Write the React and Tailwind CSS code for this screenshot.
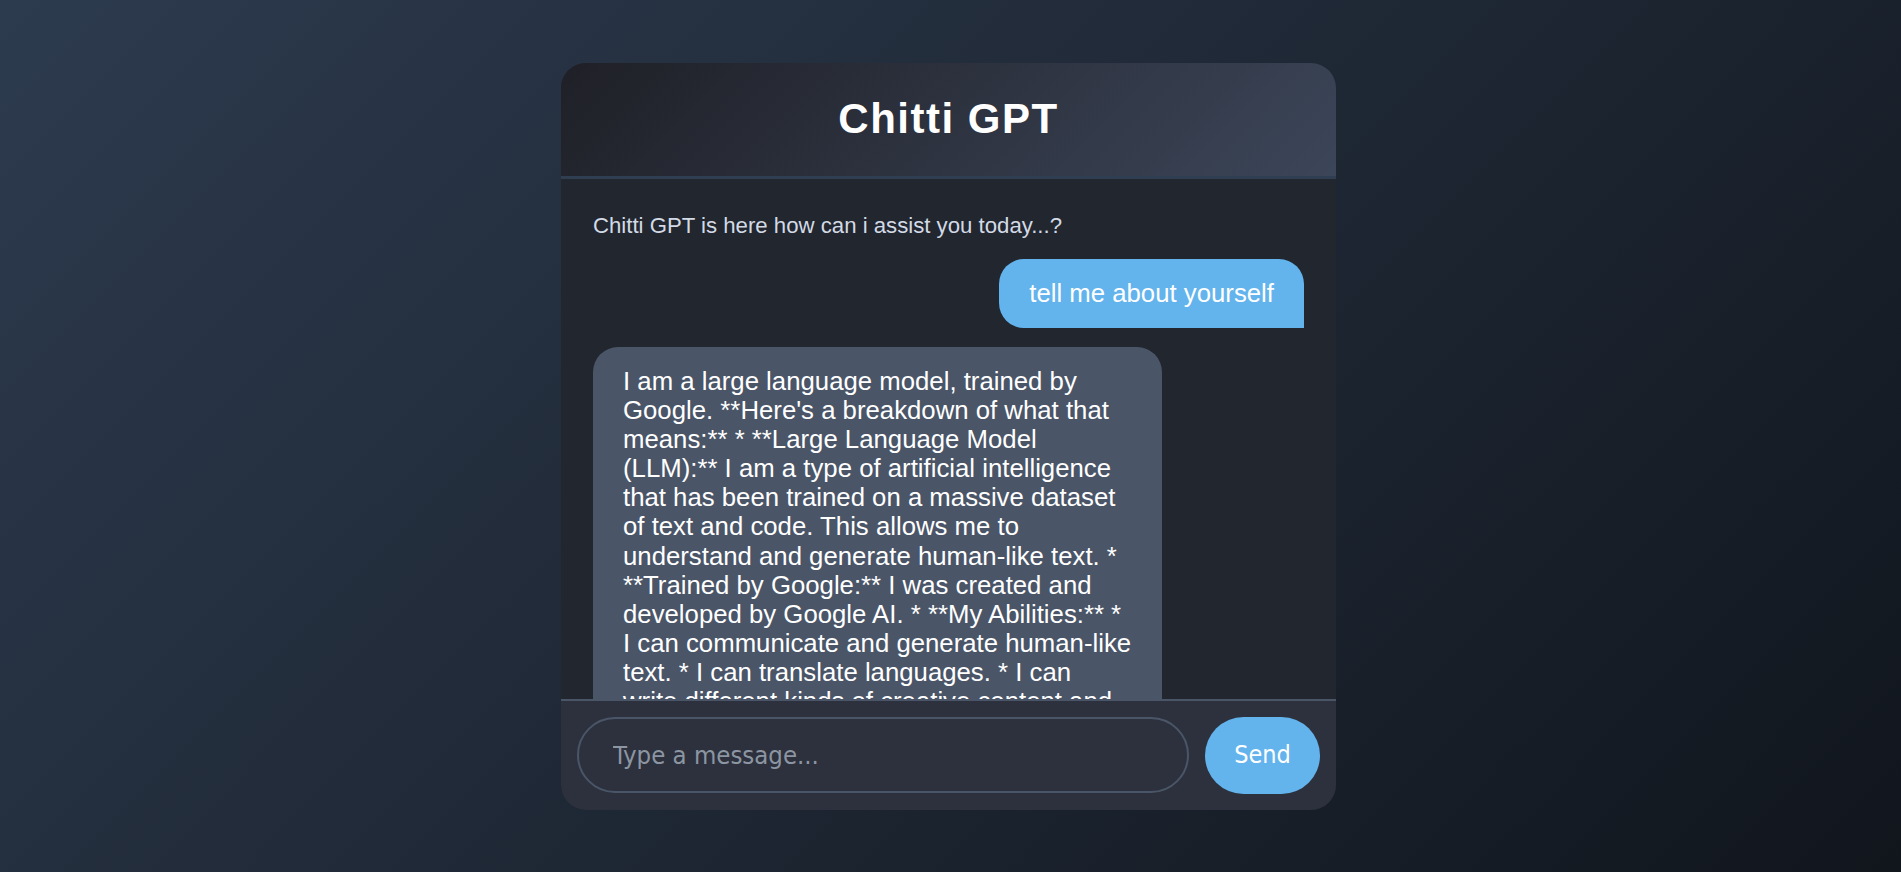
import React from "react";

const botText =
  "I am a large language model, trained by Google. **Here's a breakdown of what that means:** * **Large Language Model (LLM):** I am a type of artificial intelligence that has been trained on a massive dataset of text and code. This allows me to understand and generate human-like text. * **Trained by Google:** I was created and developed by Google AI. * **My Abilities:** * I can communicate and generate human-like text. * I can translate languages. * I can write different kinds of creative content and answer your questions in an informative way. * I am still under development, but I have learned to perform many kinds of tasks. **What I am not:** * I am not a person. I don't have feelings, opinions or personal experiences. * I don't have access to real-time information. Is there anything else you would like to know?";

export default function App() {
  return (
    <div className="min-h-screen w-full flex items-center justify-center pr-1 bg-linear-135 from-[#2d3b4f] to-[#11161d] font-['Liberation_Sans',Arial,sans-serif]">
      <div className="w-[775px] h-[747px] rounded-[25px] overflow-hidden flex flex-col bg-[#21262f]">
        <header className="h-[116px] shrink-0 flex items-center justify-center border-b-[3px] border-[#2f3e51] bg-linear-135 from-[#1f2027] to-[#3c4659]">
          <h1 className="text-[42px] font-bold tracking-[1.5px] text-white leading-none">
            Chitti GPT
          </h1>
        </header>

        <div className="flex-1 min-h-0 overflow-hidden bg-[#21262f] p-8 flex flex-col gap-[19px] text-[25.75px] leading-[29.1px]">
          <div className="self-start text-[#d3dae5] text-[22.2px] leading-[29.4px]">
            Chitti GPT is here how can i assist you today...?
          </div>
          <div className="self-end max-w-[80%] bg-[#63b3ed] text-white px-[30px] py-5 rounded-[25px] rounded-br-none">
            tell me about yourself
          </div>
          <div className="self-start shrink-0 w-[568.8px] bg-[#4a5568] text-white px-[30px] py-5 rounded-[25px] rounded-bl-none">
            {botText}
          </div>
        </div>

        <footer className="shrink-0 border-t-2 border-[#4a5568] bg-[#2c313d] px-4 py-4 flex items-center gap-4 font-['DejaVu_Sans_Condensed','DejaVu_Sans',sans-serif] font-stretch-condensed">
          <input
            type="text"
            placeholder="Type a message..."
            className="flex-1 min-w-0 h-[76px] rounded-full border-2 border-[#4a5667] bg-transparent pl-[34px] pr-6 text-[25.5px] text-white placeholder:text-[#8c95a2] outline-none font-['DejaVu_Sans_Condensed','DejaVu_Sans',sans-serif] font-stretch-condensed"
          />
          <button className="w-[115px] h-[77px] shrink-0 rounded-full bg-[#63b3ed] text-white text-[25px] flex items-center justify-center font-['DejaVu_Sans_Condensed','DejaVu_Sans',sans-serif] font-stretch-condensed">
            Send
          </button>
        </footer>
      </div>
    </div>
  );
}
